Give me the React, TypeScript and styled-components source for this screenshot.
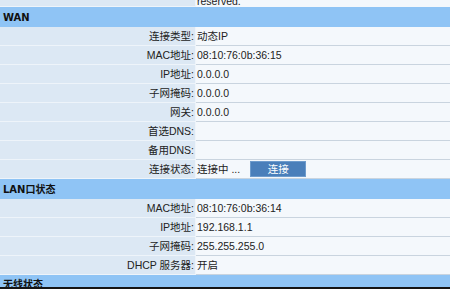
import React from "react";
import styled, { createGlobalStyle } from "styled-components";

const GlobalStyle = createGlobalStyle`
  html, body {
    margin: 0;
    padding: 0;
    background: #f4f8fc;
  }
  body {
    font-family: "Liberation Sans", "Noto Sans CJK SC", sans-serif;
    font-size: 10.5px;
    color: #222;
  }
`;

const Page = styled.div`
  width: 450px;
  height: 289px;
  overflow: hidden;
  display: flex;
  flex-direction: column;
`;

const Row = styled.div<{ $h?: number }>`
  display: grid;
  grid-template-columns: 196px 1fr;
  height: ${(p) => p.$h ?? 19}px;
  flex-shrink: 0;
`;

const Label = styled.div`
  background: #dce8f4;
  border-right: 1px solid #eef4fa;
  border-bottom: 1px solid #eef4fa;
  text-align: right;
  padding-right: 1px;
  line-height: 18px;
  white-space: nowrap;
`;

const Value = styled.div`
  background: #f4f8fc;
  border-bottom: 1px solid #c9d4df;
  padding-left: 1px;
  line-height: 18px;
  white-space: nowrap;
  display: flex;
  align-items: center;
`;

const Clipped = styled(Value)`
  overflow: hidden;
  border-bottom: none;
  align-items: flex-start;
  span {
    margin-top: -8px;
  }
`;

const Header = styled.div<{ $last?: boolean }>`
  height: ${(p) => (p.$last ? 12 : 20)}px;
  flex-shrink: 0;
  background: #8fc4f5;
  font-family: "DejaVu Sans", "Noto Sans CJK SC", sans-serif;
  font-weight: bold;
  font-size: 10px;
  padding-left: 3px;
  line-height: ${(p) => (p.$last ? 20 : 21)}px;
  overflow: hidden;
  color: #111;
  border-bottom: ${(p) => (p.$last ? "2px solid #151515" : "none")};
`;

const ConnectButton = styled.button`
  margin-left: 10px;
  width: 56px;
  height: 16px;
  padding: 0;
  background: #4a7fba;
  border: 1px solid #6d9bcc;
  color: #fff;
  font-family: "Liberation Sans", "Noto Sans CJK SC", sans-serif;
  font-size: 10.5px;
  line-height: 14px;
`;

type Item = { label: string; value: React.ReactNode };

const wan: Item[] = [
  { label: "连接类型:", value: "动态IP" },
  { label: "MAC地址:", value: "08:10:76:0b:36:15" },
  { label: "IP地址:", value: "0.0.0.0" },
  { label: "子网掩码:", value: "0.0.0.0" },
  { label: "网关:", value: "0.0.0.0" },
  { label: "首选DNS:", value: "" },
  { label: "备用DNS:", value: "" },
  {
    label: "连接状态:",
    value: (
      <>
        连接中 ...
        <ConnectButton>连接</ConnectButton>
      </>
    ),
  },
];

const lan: Item[] = [
  { label: "MAC地址:", value: "08:10:76:0b:36:14" },
  { label: "IP地址:", value: "192.168.1.1" },
  { label: "子网掩码:", value: "255.255.255.0" },
  { label: "DHCP 服务器:", value: "开启" },
];

const InfoRows = ({ items }: { items: Item[] }) => (
  <>
    {items.map((it) => (
      <Row key={it.label}>
        <Label>{it.label}</Label>
        <Value>{it.value}</Value>
      </Row>
    ))}
  </>
);

export default function App() {
  return (
    <>
      <GlobalStyle />
      <Page>
        <Row $h={7}>
          <Label />
          <Clipped>
            <span>reserved.</span>
          </Clipped>
        </Row>
        <Header>WAN</Header>
        <InfoRows items={wan} />
        <Header>LAN口状态</Header>
        <InfoRows items={lan} />
        <Header $last>无线状态</Header>
      </Page>
    </>
  );
}
